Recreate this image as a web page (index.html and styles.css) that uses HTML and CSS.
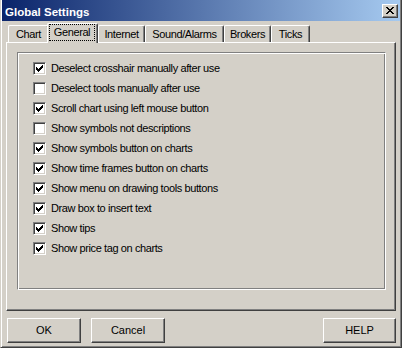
FILE: index.html
```html
<!DOCTYPE html>
<html lang="en">
<head>
    <meta charset="UTF-8">
    <title>Global Settings</title>
    <link rel="stylesheet" href="styles.css">
</head>
<body>
    <div class="window">
        <div class="titlebar">
            <span class="title">Global Settings</span>
            <span class="close-btn">
                <svg width="14" height="12" viewBox="1 1 14 12" shape-rendering="crispEdges">
                    <path d="M4 3h2v1h-2z M10 3h2v1h-2z M5 4h2v1h-2z M9 4h2v1h-2z M6 5h4v1h-4z M7 6h2v1h-2z M6 7h4v1h-4z M5 8h2v1h-2z M9 8h2v1h-2z M4 9h2v1h-2z M10 9h2v1h-2z" fill="#000"/>
                </svg>
            </span>
        </div>
        <div class="tabs">
            <div class="tab tab-chart">Chart</div>
            <div class="tab tab-general active"><span class="focus">General</span></div>
            <div class="tab tab-internet">Internet</div>
            <div class="tab tab-sound">Sound/Alarms</div>
            <div class="tab tab-brokers">Brokers</div>
            <div class="tab tab-ticks">Ticks</div>
        </div>
        <div class="panel">
            <div class="group">
                <div class="option"><span class="checkbox checked"><svg width="11" height="11" viewBox="1 1 11 11" shape-rendering="crispEdges"><path d="M3 5v3h1v1h1v1h1v-1h1v-1h1v-1h1v-1h1v-3h-1v1h-1v1h-1v1h-1v1h-1v-1h-1v-1z" fill="#000"/></svg></span>Deselect crosshair manually after use</div>
                <div class="option"><span class="checkbox"></span>Deselect tools manually after use</div>
                <div class="option"><span class="checkbox checked"><svg width="11" height="11" viewBox="1 1 11 11" shape-rendering="crispEdges"><path d="M3 5v3h1v1h1v1h1v-1h1v-1h1v-1h1v-1h1v-3h-1v1h-1v1h-1v1h-1v1h-1v-1h-1v-1z" fill="#000"/></svg></span>Scroll chart using left mouse button</div>
                <div class="option"><span class="checkbox"></span>Show symbols not descriptions</div>
                <div class="option"><span class="checkbox checked"><svg width="11" height="11" viewBox="1 1 11 11" shape-rendering="crispEdges"><path d="M3 5v3h1v1h1v1h1v-1h1v-1h1v-1h1v-1h1v-3h-1v1h-1v1h-1v1h-1v1h-1v-1h-1v-1z" fill="#000"/></svg></span>Show symbols button on charts</div>
                <div class="option"><span class="checkbox checked"><svg width="11" height="11" viewBox="1 1 11 11" shape-rendering="crispEdges"><path d="M3 5v3h1v1h1v1h1v-1h1v-1h1v-1h1v-1h1v-3h-1v1h-1v1h-1v1h-1v1h-1v-1h-1v-1z" fill="#000"/></svg></span>Show time frames button on charts</div>
                <div class="option"><span class="checkbox checked"><svg width="11" height="11" viewBox="1 1 11 11" shape-rendering="crispEdges"><path d="M3 5v3h1v1h1v1h1v-1h1v-1h1v-1h1v-1h1v-3h-1v1h-1v1h-1v1h-1v1h-1v-1h-1v-1z" fill="#000"/></svg></span>Show menu on drawing tools buttons</div>
                <div class="option"><span class="checkbox checked"><svg width="11" height="11" viewBox="1 1 11 11" shape-rendering="crispEdges"><path d="M3 5v3h1v1h1v1h1v-1h1v-1h1v-1h1v-1h1v-3h-1v1h-1v1h-1v1h-1v1h-1v-1h-1v-1z" fill="#000"/></svg></span>Draw box to insert text</div>
                <div class="option"><span class="checkbox checked"><svg width="11" height="11" viewBox="1 1 11 11" shape-rendering="crispEdges"><path d="M3 5v3h1v1h1v1h1v-1h1v-1h1v-1h1v-1h1v-3h-1v1h-1v1h-1v1h-1v1h-1v-1h-1v-1z" fill="#000"/></svg></span>Show tips</div>
                <div class="option"><span class="checkbox checked"><svg width="11" height="11" viewBox="1 1 11 11" shape-rendering="crispEdges"><path d="M3 5v3h1v1h1v1h1v-1h1v-1h1v-1h1v-1h1v-3h-1v1h-1v1h-1v1h-1v1h-1v-1h-1v-1z" fill="#000"/></svg></span>Show price tag on charts</div>
            </div>
        </div>
        <div class="footer">
            <div class="button">OK</div>
            <div class="button cancel">Cancel</div>
            <div class="button help">HELP</div>
        </div>
    </div>
</body>
</html>
```

FILE: styles.css
```css
html, body {
    margin: 0;
    padding: 0;
    background: #D4D0C8;
    font-family: "Liberation Sans", Arial, sans-serif;
    font-size: 11px;
    color: #000;
}
.window {
    width: 402px;
    height: 348px;
    box-sizing: border-box;
    background: #D4D0C8;
    border-left: 1px solid #D4D0C8;
    border-right: 1px solid #404040;
    border-bottom: 1px solid #404040;
    box-shadow: inset 1px 0 #fff, inset -1px -1px #808080;
    padding: 0 1px;
}
.titlebar {
    height: 21px;
    display: flex;
    align-items: flex-start;
    justify-content: space-between;
    padding: 0 2px 0 3px;
    background: linear-gradient(to right, #0A246A, #A6CAF0);
}
.title {
    margin-top: 6px;
    line-height: 13px;
    font-size: 11.5px;
    font-weight: bold;
    color: #fff;
}
.close-btn {
    width: 16px;
    height: 14px;
    margin-top: 4px;
    box-sizing: border-box;
    background: #D4D0C8;
    border: 1px solid;
    border-color: #fff #404040 #404040 #fff;
    box-shadow: inset -1px -1px #808080;
}
.close-btn svg {
    display: block;
}

/* pestañas */
.tabs {
    display: flex;
    align-items: flex-end;
    margin: 2px 4px 0 4px;
    padding-left: 2px;
}
.tab {
    height: 17px;
    box-sizing: border-box;
    border: 1px solid;
    border-bottom: none;
    border-color: #fff #404040 #fff #fff;
    border-radius: 2px 2px 0 0;
    box-shadow: inset -1px 0 #808080;
    line-height: 16px;
    text-align: center;
    letter-spacing: -0.4px;
}
.tab.active {
    height: 20px;
    margin: 0 0 -1px -2px;
    position: relative;
    z-index: 1;
    background: #D4D0C8;
}
.focus {
    display: block;
    width: 46px;
    height: 17px;
    margin-left: 1px;
    box-sizing: border-box;
    border: 1px dotted #000;
    line-height: 15px;
}
.tab-chart { width: 41px; }
.tab-general { width: 51px; }
.tab-internet { width: 47px; }
.tab-sound { width: 79px; }
.tab-brokers { width: 47px; }
.tab-ticks { width: 39px; }

.panel {
    height: 269px;
    margin: 0 4px;
    box-sizing: border-box;
    border: 1px solid;
    border-color: #fff #404040 #404040 #fff;
    box-shadow: inset -1px -1px #808080;
    padding: 9px 0 0 10px;
}
.group {
    width: 369px;
    height: 238px;
    box-sizing: border-box;
    border: 1px solid;
    border-color: #808080 #fff #fff #808080;
    box-shadow: inset 1px 1px #fff, inset -1px -1px #808080;
    padding: 9px 0 0 15px;
    display: flex;
    flex-direction: column;
    gap: 7px;
}
.option {
    display: flex;
    align-items: center;
    height: 13px;
    line-height: 13px;
    letter-spacing: -0.4px;
    white-space: nowrap;
}
.checkbox {
    width: 13px;
    height: 13px;
    flex: none;
    box-sizing: border-box;
    margin-right: 5px;
    background: #fff;
    border: 1px solid;
    border-color: #808080 #fff #fff #808080;
    box-shadow: inset 1px 1px #404040, inset -1px -1px #D4D0C8;
}
.checkbox svg {
    display: block;
}

/* botones */
.footer {
    display: flex;
    margin-top: 7px;
    padding: 0 4px 0 5px;
}
.button {
    width: 74px;
    height: 25px;
    box-sizing: border-box;
    border: 1px solid;
    border-color: #fff #404040 #404040 #fff;
    box-shadow: inset -1px -1px #808080;
    line-height: 23px;
    text-align: center;
}
.button.cancel {
    margin-left: 10px;
}
.button.help {
    width: 73px;
    margin-left: auto;
}
```
